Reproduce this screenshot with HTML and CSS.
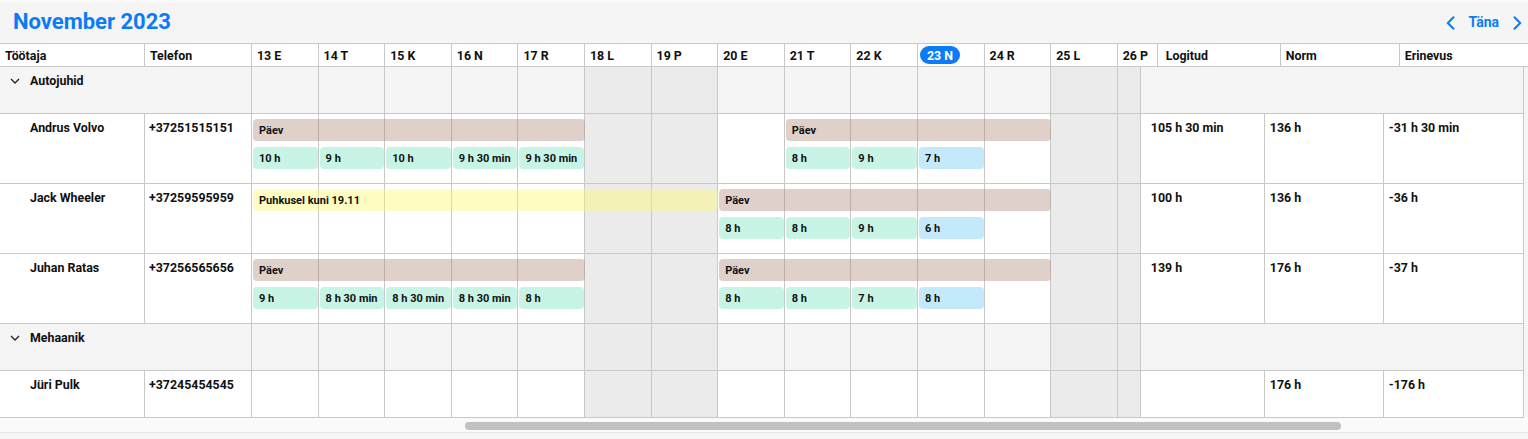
FILE: index.html
```html
<!DOCTYPE html>
<html lang="et">
<head>
    <meta charset="UTF-8">
    <meta name="viewport" content="width=device-width, initial-scale=1.0">
    <title>Tööajagraafik</title>
    <link rel="stylesheet" href="styles.css">
</head>
<body>

<div class="topbar">
    <h1 class="month">November 2023</h1>
    <div class="nav">
        <button class="arrow" aria-label="Eelmine">
            <svg width="9" height="14" viewBox="0 0 9 14"><path d="M7.5 1.2 L1.8 7 L7.5 12.8"/></svg>
        </button>
        <button class="today-btn">Täna</button>
        <button class="arrow" aria-label="Järgmine">
            <svg width="9" height="14" viewBox="0 0 9 14"><path d="M1.5 1.2 L7.2 7 L1.5 12.8"/></svg>
        </button>
    </div>
</div>

<div class="thead">
    <div class="th">Töötaja</div>
    <div class="th">Telefon</div>
    <div class="th">13 E</div>
    <div class="th">14 T</div>
    <div class="th">15 K</div>
    <div class="th">16 N</div>
    <div class="th">17 R</div>
    <div class="th">18 L</div>
    <div class="th">19 P</div>
    <div class="th">20 E</div>
    <div class="th">21 T</div>
    <div class="th">22 K</div>
    <div class="th th-today"><span class="pill">23 N</span></div>
    <div class="th">24 R</div>
    <div class="th">25 L</div>
    <div class="th">26 P</div>
    <div class="th th-logged">Logitud</div>
    <div class="th">Norm</div>
    <div class="th">Erinevus</div>
</div>

<div class="tbody">
    <!-- Autojuhid -->
    <div class="row group">
        <div class="group-label">
            <svg class="chev" width="10" height="6" viewBox="0 0 10 6"><path d="M1 1 L5 5 L9 1"/></svg>
            Autojuhid
        </div>
        <div class="days">
            <div class="cells"><span></span><span></span><span></span><span></span><span></span><span class="we"></span><span class="we"></span><span></span><span></span><span></span><span></span><span></span><span class="we"></span><span class="we"></span></div>
        </div>
        <div class="sum-span"></div>
    </div>

    <div class="row">
        <div class="name">Andrus Volvo</div>
        <div class="phone">+37251515151</div>
        <div class="days">
            <div class="cells"><span></span><span></span><span></span><span></span><span></span><span class="we"></span><span class="we"></span><span></span><span></span><span></span><span></span><span></span><span class="we"></span><span class="we"></span></div>
            <div class="bars">
                <div class="bar shift" style="grid-column: 1 / 6">Päev</div>
                <div class="bar shift" style="grid-column: 9 / 13">Päev</div>
                <div class="chip" style="grid-column: 1">10 h</div>
                <div class="chip" style="grid-column: 2">9 h</div>
                <div class="chip" style="grid-column: 3">10 h</div>
                <div class="chip" style="grid-column: 4">9 h 30 min</div>
                <div class="chip" style="grid-column: 5">9 h 30 min</div>
                <div class="chip" style="grid-column: 9">8 h</div>
                <div class="chip" style="grid-column: 10">9 h</div>
                <div class="chip now" style="grid-column: 11">7 h</div>
            </div>
        </div>
        <div class="sum logged">105 h 30 min</div>
        <div class="sum">136 h</div>
        <div class="sum">-31 h 30 min</div>
    </div>

    <div class="row">
        <div class="name">Jack Wheeler</div>
        <div class="phone">+37259595959</div>
        <div class="days">
            <div class="cells"><span></span><span></span><span></span><span></span><span></span><span class="we"></span><span class="we"></span><span></span><span></span><span></span><span></span><span></span><span class="we"></span><span class="we"></span></div>
            <div class="bars">
                <div class="bar leave" style="grid-column: 1 / 8">Puhkusel kuni 19.11</div>
                <div class="bar shift" style="grid-column: 8 / 13">Päev</div>
                <div class="chip" style="grid-column: 8">8 h</div>
                <div class="chip" style="grid-column: 9">8 h</div>
                <div class="chip" style="grid-column: 10">9 h</div>
                <div class="chip now" style="grid-column: 11">6 h</div>
            </div>
        </div>
        <div class="sum logged">100 h</div>
        <div class="sum">136 h</div>
        <div class="sum">-36 h</div>
    </div>

    <div class="row">
        <div class="name">Juhan Ratas</div>
        <div class="phone">+37256565656</div>
        <div class="days">
            <div class="cells"><span></span><span></span><span></span><span></span><span></span><span class="we"></span><span class="we"></span><span></span><span></span><span></span><span></span><span></span><span class="we"></span><span class="we"></span></div>
            <div class="bars">
                <div class="bar shift" style="grid-column: 1 / 6">Päev</div>
                <div class="bar shift" style="grid-column: 8 / 13">Päev</div>
                <div class="chip" style="grid-column: 1">9 h</div>
                <div class="chip" style="grid-column: 2">8 h 30 min</div>
                <div class="chip" style="grid-column: 3">8 h 30 min</div>
                <div class="chip" style="grid-column: 4">8 h 30 min</div>
                <div class="chip" style="grid-column: 5">8 h</div>
                <div class="chip" style="grid-column: 8">8 h</div>
                <div class="chip" style="grid-column: 9">8 h</div>
                <div class="chip" style="grid-column: 10">7 h</div>
                <div class="chip now" style="grid-column: 11">8 h</div>
            </div>
        </div>
        <div class="sum logged">139 h</div>
        <div class="sum">176 h</div>
        <div class="sum">-37 h</div>
    </div>

    <!-- Mehaanik -->
    <div class="row group">
        <div class="group-label">
            <svg class="chev" width="10" height="6" viewBox="0 0 10 6"><path d="M1 1 L5 5 L9 1"/></svg>
            Mehaanik
        </div>
        <div class="days">
            <div class="cells"><span></span><span></span><span></span><span></span><span></span><span class="we"></span><span class="we"></span><span></span><span></span><span></span><span></span><span></span><span class="we"></span><span class="we"></span></div>
        </div>
        <div class="sum-span"></div>
    </div>

    <div class="row short">
        <div class="name">Jüri Pulk</div>
        <div class="phone">+37245454545</div>
        <div class="days">
            <div class="cells"><span></span><span></span><span></span><span></span><span></span><span class="we"></span><span class="we"></span><span></span><span></span><span></span><span></span><span></span><span class="we"></span><span class="we"></span></div>
        </div>
        <div class="sum logged"></div>
        <div class="sum">176 h</div>
        <div class="sum">-176 h</div>
    </div>
</div>

<div class="hscroll">
    <div class="thumb"></div>
</div>

</body>
</html>
```

FILE: styles.css
```css
* {
    box-sizing: border-box;
}
body {
    margin: 0;
    background: #f5f5f5;
    font-family: Roboto, "Liberation Sans", sans-serif;
    font-size: 12.4px;
    font-weight: 700;
    color: #111;
}

/* top bar */
.topbar {
    display: flex;
    align-items: center;
    justify-content: space-between;
    height: 43px;
    padding: 0 6px 0 13px;
    box-shadow: inset 0 3px #fafafa;
}
.month {
    margin: 0;
    font-size: 22px;
    font-weight: 700;
    color: #0b7bf7;
}
.nav {
    display: flex;
    align-items: center;
    gap: 14px;
}
.nav button {
    background: none;
    border: 0;
    padding: 0;
    font: inherit;
    color: #0b7bf7;
    cursor: pointer;
}
.arrow {
    display: flex;
    margin-top: 3px;
}
.arrow path {
    fill: none;
    stroke: #0b7bf7;
    stroke-width: 2;
    stroke-linecap: round;
    stroke-linejoin: round;
}
.nav .today-btn {
    font-size: 14px;
}

/* header row */
.thead {
    display: grid;
    grid-template-columns: 145px 107px repeat(13, 66.6px) 40px 123px 119px 1fr;
    height: 24px;
    background: #fff;
    border-top: 1px solid #c8c8c8;
    border-bottom: 1px solid #c8c8c8;
}
.th {
    display: flex;
    align-items: center;
    padding-left: 5px;
    border-right: 1px solid #c8c8c8;
    white-space: nowrap;
}
.th:last-child {
    border-right: 0;
}
.th-today {
    padding-left: 2px;
}
.th-logged {
    padding-left: 8px;
}
.pill {
    display: flex;
    align-items: center;
    height: 18px;
    padding: 0 7px;
    border-radius: 9px;
    background: #0b7bf7;
    color: #fff;
}

/* body rows */
.tbody {
    width: max-content;
}
.row {
    display: grid;
    grid-template-columns: 145px 107px 888.8px 124px 119px 140px;
    height: 70px;
    background: #fff;
    border-bottom: 1px solid #c8c8c8;
}
.row.group,
.row.short {
    height: 47px;
}
.row.group {
    background: #f5f5f5;
}
.name,
.phone,
.sum,
.group-label,
.sum-span {
    border-right: 1px solid #c8c8c8;
    padding: 6px 5px 0;
    white-space: nowrap;
}
.name {
    padding-left: 30px;
}
.phone {
    padding-left: 4px;
}
.sum.logged {
    padding-left: 10px;
}
.group-label {
    grid-column: 1 / 3;
    display: flex;
    align-items: flex-start;
    gap: 10px;
    padding-left: 10px;
}
.chev {
    margin-top: 5px;
}
.chev path {
    fill: none;
    stroke: #222;
    stroke-width: 1.3;
}
.sum-span {
    grid-column: 4 / 7;
}

/* day area: cell grid with bars laid over it */
.days {
    display: grid;
}
.days > * {
    grid-area: 1 / 1;
}
.cells,
.bars {
    display: grid;
    grid-template-columns: repeat(13, 66.6px) 23px;
}
.cells span {
    border-right: 1px solid #c8c8c8;
}
.cells .we {
    background: #ebebeb;
}
.bars {
    grid-template-rows: 22px 22px;
    row-gap: 6px;
    align-content: start;
    padding-top: 5px;
}
.bar,
.chip {
    display: flex;
    align-items: center;
    padding-left: 6px;
    border-radius: 4px;
    font-size: 11px;
    white-space: nowrap;
    overflow: hidden;
}
.bar {
    grid-row: 1;
    margin-left: 1px;
}
.shift {
    background: rgba(175, 140, 120, 0.4);
}
.leave {
    background: rgba(255, 250, 100, 0.4);
}
.chip {
    grid-row: 2;
    margin: 0 1px;
    background: #c8f4e6;
}
.chip.now {
    background: #c4e9fa;
}

/* horizontal scrollbar */
.hscroll {
    height: 15px;
    padding-top: 4px;
    background: #fafafa;
    border-bottom: 1px solid #e6e6e6;
}
.thumb {
    width: 876px;
    height: 8px;
    margin-left: 465px;
    border-radius: 4px;
    background: #c1c1c1;
}
```
